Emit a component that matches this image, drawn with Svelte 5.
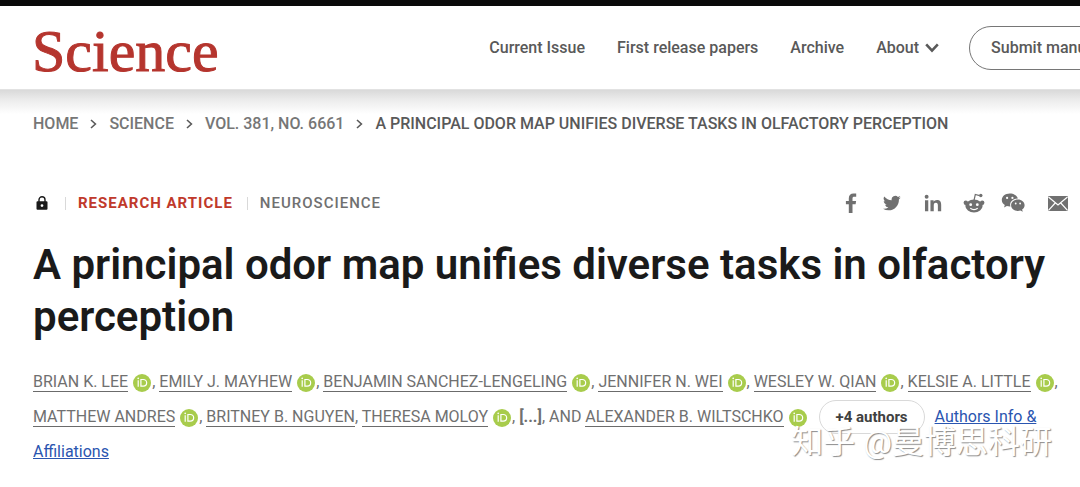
<script lang="ts">
  type Author = { name: string; orcid: boolean }

  const navLinks = ['Current Issue', 'First release papers', 'Archive']

  const crumbs = ['Home', 'Science', 'Vol. 381, No. 6661']

  const title = 'A principal odor map unifies diverse tasks in olfactory perception'

  const authors: Author[] = [
    { name: 'Brian K. Lee', orcid: true },
    { name: 'Emily J. Mayhew', orcid: true },
    { name: 'Benjamin Sanchez-Lengeling', orcid: true },
    { name: 'Jennifer N. Wei', orcid: true },
    { name: 'Wesley W. Qian', orcid: true },
    { name: 'Kelsie A. Little', orcid: true },
    { name: 'Matthew Andres', orcid: true },
    { name: 'Britney B. Nguyen', orcid: false },
    { name: 'Theresa Moloy', orcid: true },
  ]
</script>

{#snippet orcidBadge(name: string)}
  <a class="orcid" href="#orcid" aria-label="ORCID profile of {name}">
    <svg viewBox="0 0 18 18" width="18" height="18">
      <circle cx="9" cy="9" r="9" fill="#a8cc4c" />
      <g fill="none" stroke="#fff" stroke-width="1.2">
        <path d="M5.2 6.2v6.6M7.9 5.5v6.7h2.4a3.35 3.35 0 0 0 0-6.7z" />
      </g>
      <circle cx="5.2" cy="4.4" r="0.8" fill="#fff" />
    </svg>
  </a>
{/snippet}

{#snippet author(a: Author)}
  <span class="author"><a class="name" href="#author">{a.name}</a>{#if a.orcid}{@render orcidBadge(a.name)}{/if}</span>
{/snippet}

<div class="page">
  <header>
    <a class="logo" href="#home">Science</a>
    <nav aria-label="Main">
      {#each navLinks as label (label)}
        <a href="#nav">{label}</a>
      {/each}
      <button type="button" class="about">
        About
        <svg viewBox="0 0 14 10" width="14" height="10" aria-hidden="true">
          <path d="M1.2 1.4 7 7.6l5.8-6.2" fill="none" stroke="currentColor" stroke-width="2.6" />
        </svg>
      </button>
      <a class="submit" href="#submit">Submit manuscript</a>
    </nav>
  </header>

  <main>
    <nav class="crumbs" aria-label="Breadcrumb">
      {#each crumbs as crumb (crumb)}
        <a href="#crumb">{crumb}</a>
        <svg viewBox="0 0 7 10" width="7" height="10" aria-hidden="true">
          <path d="M1 1l4.4 4L1 9" fill="none" stroke="currentColor" stroke-width="1.6" />
        </svg>
      {/each}
      <span class="current">{title}</span>
    </nav>

    <div class="meta">
      <svg class="lock" viewBox="0 0 12 14" width="12" height="14" role="img" aria-label="Restricted access">
        <path d="M3 6V3.8a3 3 0 0 1 6 0V6" fill="none" stroke="#1a1a1a" stroke-width="1.4" />
        <path fill="#1a1a1a" fill-rule="evenodd" d="M1.5 5.2h9a1 1 0 0 1 1 1v6.6a1 1 0 0 1-1 1h-9a1 1 0 0 1-1-1V6.2a1 1 0 0 1 1-1zM6 8.2a1.4 1.4 0 1 0 0 2.8 1.4 1.4 0 0 0 0-2.8z" />
      </svg>
      <span class="kind">Research Article</span>
      <a class="topic" href="#topic">Neuroscience</a>

      <div class="share">
        <a href="#facebook" aria-label="Facebook">
          <svg viewBox="0 0 24 24" width="24" height="24">
            <path d="M9.8 22v-8.7H6.9V9.9h2.9V7.3c0-3 1.8-4.900 4.700-4.900h2.700v3.300h-1.900c-1.400 0-1.800.6-1.800 1.900v2.300h3.600l-.5 3.400h-3.100V22z" />
          </svg>
        </a>
        <a href="#twitter" aria-label="Twitter">
          <svg viewBox="0 0 24 24" width="18" height="18">
            <path d="M23.6 4.7a9.600 9.600 0 0 1-2.700.8 4.800 4.800 0 0 0 2.100-2.700 9.700 9.700 0 0 1-3.100 1.200 4.850 4.850 0 0 0-8.300 4.400A13.700 13.700 0 0 1 1.700 3.400a4.850 4.850 0 0 0 1.500 6.500 4.800 4.800 0 0 1-2.200-.6c0 2.300 1.600 4.300 3.900 4.800a4.900 4.900 0 0 1-2.200.1 4.850 4.850 0 0 0 4.500 3.400A9.700 9.700 0 0 1 0 19.600a13.700 13.700 0 0 0 7.400 2.200c9 0 14.100-7.600 13.800-14.400a9.900 9.900 0 0 0 2.400-2.700z" />
          </svg>
        </a>
        <a href="#linkedin" aria-label="LinkedIn">
          <svg viewBox="0 0 24 24" width="18" height="18">
            <path d="M1.300 8.300h4.400V23H1.300zM8.600 8.300h4.200v2c.8-1.400 2.300-2.400 4.600-2.400 4.600 0 5.500 2.900 5.500 6.900V23h-4.400v-7.300c0-1.900-.2-3.900-2.600-3.900s-2.900 1.800-2.900 3.800V23H8.600z" />
            <circle cx="3.5" cy="3.6" r="2.6" />
          </svg>
        </a>
        <a href="#reddit" aria-label="Reddit">
          <svg viewBox="0 0 22 22" width="22" height="22">
            <path d="M11 8.500l1.300-6 4.300 1.100" fill="none" stroke="#707070" stroke-width="1.2" />
            <circle cx="17.8" cy="3.5" r="1.7" />
            <circle cx="2.8" cy="10.7" r="2.2" />
            <circle cx="19.2" cy="10.7" r="2.2" />
            <ellipse cx="11" cy="14" rx="8.6" ry="6.4" />
            <circle cx="7.7" cy="12.7" r="1.4" fill="#fff" />
            <circle cx="14.3" cy="12.7" r="1.4" fill="#fff" />
            <path d="M7.300 16.300q3.700 2.600 7.400 0" fill="none" stroke="#fff" stroke-width="1.2" />
          </svg>
        </a>
        <a class="wechat" href="#wechat" aria-label="WeChat">
          <svg viewBox="0 0 24 22" width="24" height="22">
            <path d="M8.700 1.500C4.300 1.500.8 4.300.8 8c0 2.100 1.200 3.900 3 5.100l-.8 2.500 2.900-1.500c1 .3 1.900.4 2.900.4h.6c-1.300-4.300 2.300-8 7.100-8h.4C16 3.500 12.700 1.500 8.700 1.500z" />
            <path d="M16.900 7.500c-3.900 0-6.800 2.500-6.800 5.700s2.900 5.700 6.800 5.700c.8 0 1.700-.1 2.500-.4l2.400 1.300-.7-2.200c1.500-1.100 2.500-2.600 2.500-4.400 0-3.200-3-5.700-6.700-5.700z" />
            <g fill="#fff">
              <circle cx="6.1" cy="5.9" r="1.1" />
              <circle cx="11.4" cy="5.9" r="1.1" />
              <circle cx="14.7" cy="11.5" r="0.9" />
              <circle cx="19.1" cy="11.5" r="0.9" />
            </g>
          </svg>
        </a>
        <a class="mail" href="#mail" aria-label="Email">
          <svg viewBox="0 0 20 15" width="20" height="15">
            <rect width="20" height="15" rx="1" />
            <path d="M.5 1l9.500 8 9.500-8M.5 14.300L7.200 7M19.500 14.300L12.800 7" fill="none" stroke="#fff" stroke-width="1.2" />
          </svg>
        </a>
      </div>
    </div>

    <h1>{title}</h1>

    <div class="authors">
      {#each authors as a (a.name)}
        {@render author(a)}<span class:spaced={a.orcid}>,</span>{' '}
      {/each}
      <b>[...]</b>, AND
      {@render author({ name: 'Alexander B. Wiltschko', orcid: true })}
      <button type="button" class="more">+4 authors</button>
      <a class="info" href="#info">Authors Info &amp; Affiliations</a>
    </div>
  </main>

  <div class="watermark">知乎 @曼博思科研</div>
</div>

<style>
  :global(body) {
    margin: 0;
    background: #fff;
  }
  .page {
    position: relative;
    overflow: hidden;
    padding-bottom: 16px;
    font-family: Roboto, 'Noto Sans CJK SC', sans-serif;
    font-size: 16px;
    color: #707070;
  }
  a {
    color: inherit;
    text-decoration: none;
  }
  button {
    font: inherit;
    color: inherit;
    background: none;
    border: none;
    padding: 0;
    cursor: pointer;
  }
  header {
    display: flex;
    align-items: center;
    justify-content: space-between;
    height: 83px;
    padding-left: 32px;
    border-top: 6px solid #0a0a0a;
    border-bottom: 1px solid #e2e2e2;
  }
  .logo {
    padding-top: 6px;
    font-family: 'Liberation Serif', serif;
    font-size: 60px;
    line-height: 60px;
    color: #b5352e;
    -webkit-text-stroke: 1px #b5352e;
  }
  header nav {
    display: flex;
    align-items: center;
    gap: 32px;
    margin-right: -69px;
    font-weight: 500;
    color: #595959;
    white-space: nowrap;
  }
  .about {
    display: flex;
    align-items: center;
    gap: 6px;
  }
  .submit {
    margin-left: -2px;
    padding: 0 21px;
    border: 1px solid #767676;
    border-radius: 22px;
    line-height: 42px;
  }
  main {
    padding: 0 8px 0 33px;
    background: linear-gradient(#d9d9d9, #ececec 10px, #fff 24px);
  }
  .crumbs {
    display: flex;
    align-items: center;
    gap: 12px;
    padding-top: 22px;
    font-weight: 500;
    line-height: 24px;
    text-transform: uppercase;
    white-space: nowrap;
    color: #767676;
  }
  .crumbs svg,
  .current {
    color: #595959;
  }
  .meta {
    display: flex;
    align-items: center;
    margin-top: 55px;
    font-size: 15px;
    line-height: 24px;
    text-transform: uppercase;
  }
  .lock {
    margin: 0 17px 0 3px;
  }
  .kind,
  .topic {
    display: flex;
    align-items: center;
    letter-spacing: 1px;
  }
  .kind::before,
  .topic::before {
    content: '';
    width: 1px;
    height: 13px;
    margin-right: 12px;
    background: #d9d9d9;
  }
  .kind {
    margin-right: 14px;
    font-weight: 700;
    color: #c0392b;
  }
  .topic {
    font-weight: 500;
  }
  .share {
    display: flex;
    align-items: center;
    gap: 17px;
    margin-left: auto;
    margin-right: 4px;
  }
  .share a {
    display: flex;
    justify-content: center;
    width: 24px;
  }
  .share .wechat {
    width: 20px;
  }
  .share .mail {
    width: 20px;
    margin-left: 8px;
  }
  .share svg {
    flex: none;
    fill: #707070;
  }
  h1 {
    margin: 24px 0 0;
    font-size: 42px;
    font-weight: 600;
    line-height: 52px;
    color: #1a1a1a;
  }
  .authors {
    margin-top: 21px;
    line-height: 35px;
  }
  .author {
    white-space: nowrap;
    text-transform: uppercase;
  }
  .name {
    border-bottom: 1px solid #6b6b6b;
  }
  .orcid {
    display: inline-block;
    margin-left: 5px;
    line-height: 18px;
    vertical-align: middle;
  }
  .orcid svg {
    display: block;
  }
  .spaced {
    margin-left: 1px;
  }
  .more {
    height: 34px;
    margin: 0 6px 0 8px;
    padding: 0 16px;
    border: 1px solid #d9d9d9;
    border-radius: 17px;
    font-size: 15px;
    font-weight: 700;
    line-height: 32px;
    color: #404040;
  }
  .info {
    color: #2a55b0;
    text-decoration: underline;
  }
  .watermark {
    position: absolute;
    right: 28px;
    bottom: 23px;
    font-size: 32px;
    line-height: 40px;
    color: #fff;
    text-shadow: 1px 1px 1px #8c8c8c;
  }
</style>
